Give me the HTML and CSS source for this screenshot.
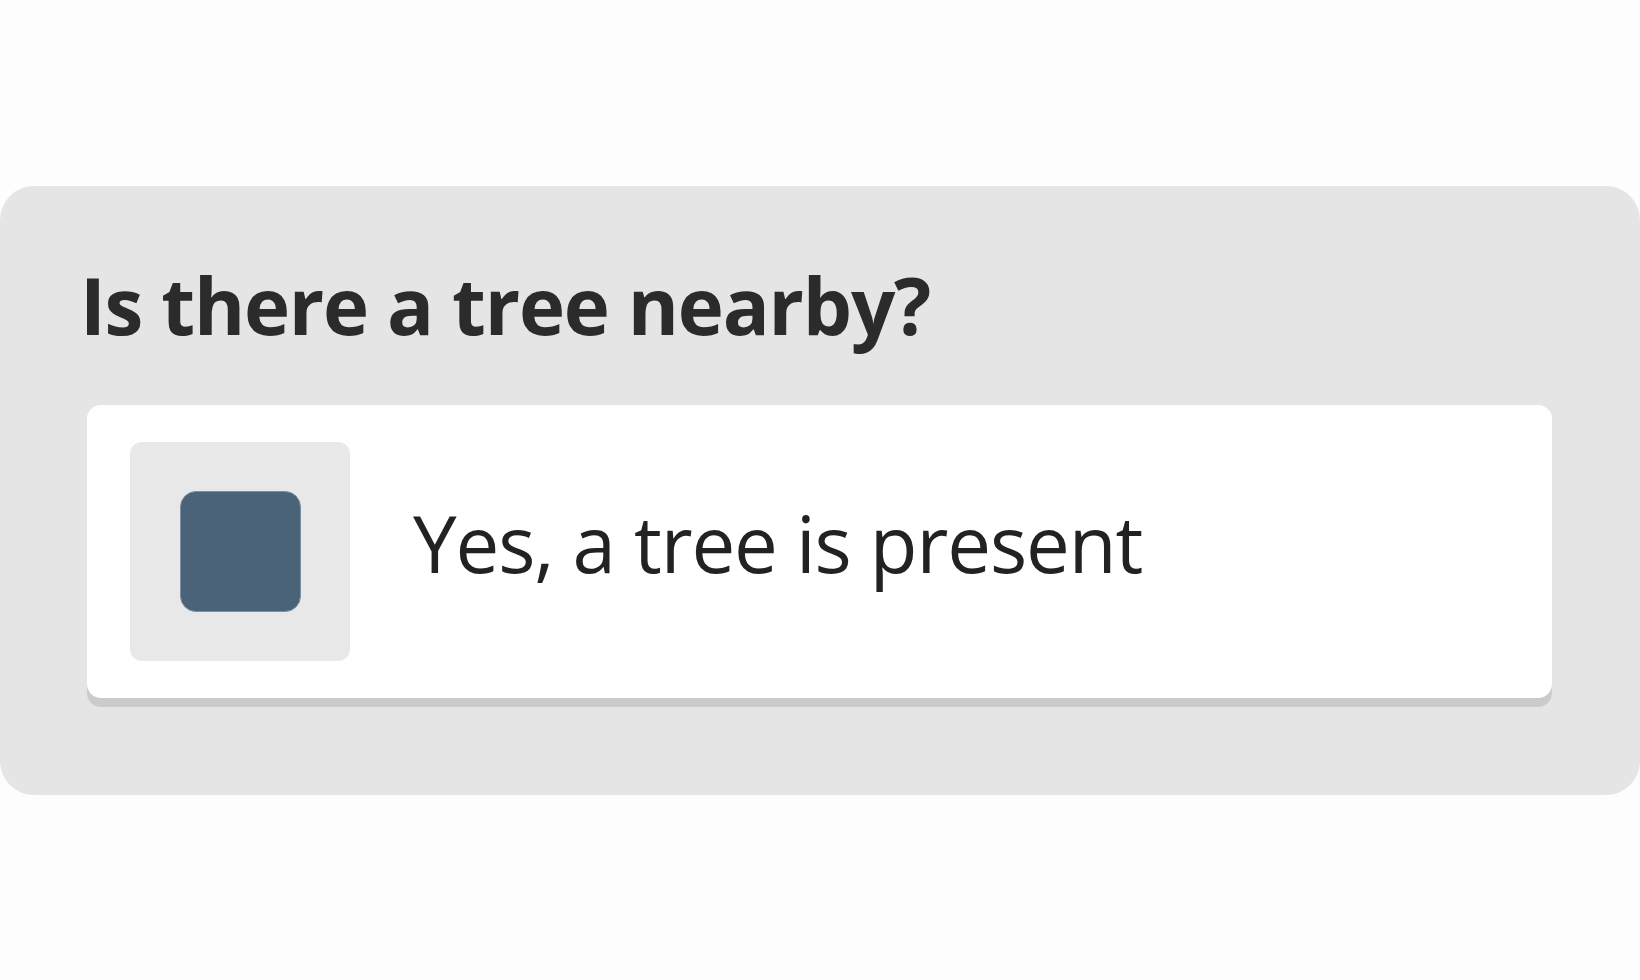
FILE: index.html
```html
<!DOCTYPE html>
<html lang="en">
<head>
<meta charset="utf-8">
<title>Tree question</title>
<link rel="stylesheet" href="styles.css">
</head>
<body>
<div class="page">
  <section class="panel">
    <h1 class="question">Is there a tree nearby?</h1>
    <div class="option">
      <div class="check-wrap">
        <div class="check"></div>
      </div>
      <span class="option-label">Yes, a tree is present</span>
    </div>
  </section>
</div>
</body>
</html>
```
FILE: styles.css
```css
html, body {
  margin: 0;
  padding: 0;
  background: #fdfdfd;
}
.page {
  width: 1640px;
  height: 980px;
  padding-top: 186px;
  box-sizing: border-box;
}
.panel {
  background: #e5e5e5;
  border-radius: 34px;
  height: 609px;
  box-sizing: border-box;
  padding: 80px 88px 0 87px;
}
.question {
  margin: 0 0 61px -7px;
  font-family: "Open Sans", "Noto Sans", sans-serif;
  font-weight: 700;
  font-size: 78px;
  line-height: 1;
  color: #2b2b2b;
  letter-spacing: -1.2px;
}
.option {
  display: flex;
  align-items: center;
  background: #fff;
  border-radius: 14px;
  height: 293px;
  box-sizing: border-box;
  padding: 0 43px;
  box-shadow: 0 9px 0 #cbcbcb;
}
.check-wrap {
  width: 220px;
  height: 219px;
  background: #e8e8e8;
  border-radius: 12px;
  display: flex;
  align-items: center;
  justify-content: center;
  flex-shrink: 0;
}
.check {
  width: 119px;
  height: 119px;
  background: #4a6378;
  border: 1px solid #7d90a0;
  border-radius: 16px;
}
.option-label {
  margin: 0 0 18px 63px;
  font-family: "Open Sans", "Noto Sans", sans-serif;
  font-weight: 400;
  font-size: 78px;
  line-height: 1;
  color: #222;
  letter-spacing: -1.1px;
}
```
